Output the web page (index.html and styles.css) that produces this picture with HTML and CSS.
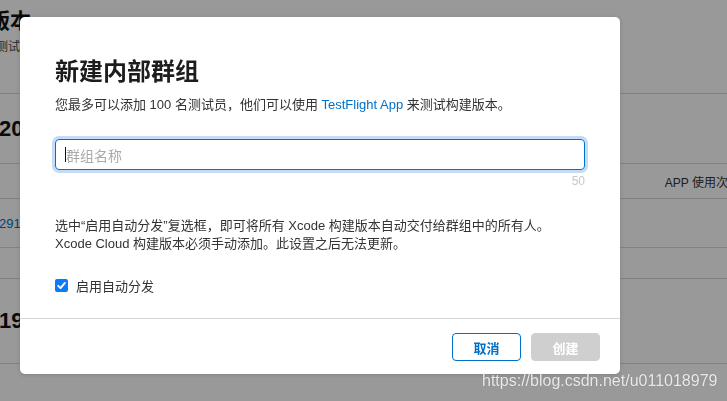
FILE: index.html
```html
<!DOCTYPE html>
<html lang="zh-CN">
<head>
<meta charset="utf-8">
<title>新建内部群组</title>
<link rel="stylesheet" href="styles.css">
</head>
<body>
<div class="page">
  <div class="page-head">
    <h1 class="page-title">版本</h1>
    <p class="page-sub">测试</p>
  </div>
  <div class="row row-big"><span class="big-num">20</span></div>
  <div class="row row-header"><span class="col-head">APP 使用次</span></div>
  <div class="row row-link"><span class="link-num">291</span></div>
  <div class="row row-thin"></div>
  <div class="row row-big2"><span class="big-num">19</span></div>
  <div class="row row-last"><span class="big-num">18</span></div>
</div>

<div class="overlay"></div>

<div class="dialog">
  <div class="dialog-body">
    <h2 class="dialog-title">新建内部群组</h2>
    <p class="dialog-desc">您最多可以添加 100 名测试员，他们可以使用 <a class="link" href="#">TestFlight App</a> 来测试构建版本。</p>
    <div class="field">
      <div class="input"><span class="caret"></span><span class="placeholder">群组名称</span></div>
      <div class="counter">50</div>
    </div>
    <p class="note">选中“启用自动分发”复选框，即可将所有 Xcode 构建版本自动交付给群组中的所有人。<br>Xcode Cloud 构建版本必须手动添加。此设置之后无法更新。</p>
    <label class="check-row">
      <span class="checkbox"><svg viewBox="0 0 13 13" width="13" height="13"><path d="M3.2 6.8 L5.5 9.1 L9.9 3.9" fill="none" stroke="#fff" stroke-width="1.9" stroke-linecap="round" stroke-linejoin="round"/></svg></span>
      <span class="check-label">启用自动分发</span>
    </label>
  </div>
  <div class="dialog-footer">
    <button class="btn btn-cancel">取消</button>
    <button class="btn btn-create">创建</button>
  </div>
</div>

<div class="watermark">https://blog.csdn.net/u011018979</div>
</body>
</html>
```

FILE: styles.css
```css
html, body {
  margin: 0;
  padding: 0;
  width: 727px;
  height: 401px;
  overflow: hidden;
  background: #fff;
  font-family: "Liberation Sans", "Noto Sans CJK SC", sans-serif;
}

.page {
  display: flex;
  flex-direction: column;
  width: 727px;
  height: 401px;
  overflow: hidden;
}

.page-head {
  flex: none;
  height: 94px;
  box-sizing: border-box;
  border-bottom: 1px solid #d9d9d9;
}

.page-title {
  margin: 7px 0 0 -11px;
  font-size: 21px;
  line-height: 28px;
  font-weight: 700;
  color: #111;
}

.page-sub {
  margin: 4px 0 0 -4px;
  font-size: 12px;
  line-height: 16px;
  color: #444;
}

.row {
  flex: none;
  box-sizing: border-box;
  border-bottom: 1px solid #d9d9d9;
  display: flex;
  align-items: center;
}

.row-big { height: 70px; }
.row-header { height: 35px; justify-content: flex-end; }
.row-link { height: 49px; }
.row-thin { height: 31px; }
.row-big2 { height: 85px; }
.row-last { height: 37px; align-items: flex-end; border-bottom: none; }

.big-num {
  margin-left: -1px;
  font-size: 22px;
  font-weight: 700;
  color: #111;
}

.row-last .big-num { margin-bottom: -22px; }

.col-head {
  margin-right: -1px;
  font-size: 12px;
  color: #333;
  white-space: nowrap;
}

.link-num {
  margin-left: -1px;
  font-size: 13px;
  color: #0070c9;
}

.overlay {
  position: fixed;
  inset: 0;
  background: rgba(0, 0, 0, 0.4);
}

.dialog {
  position: absolute;
  left: 20px;
  top: 17px;
  width: 600px;
  height: 357px;
  background: #fff;
  border-radius: 5px;
  display: flex;
  flex-direction: column;
  box-shadow: 0 1px 4px rgba(0, 0, 0, 0.15);
}

.dialog-body {
  padding: 39px 35px 0 35px;
  display: flex;
  flex-direction: column;
  height: 302px;
  box-sizing: border-box;
  border-bottom: 1px solid #d6d6d6;
}

.dialog-title {
  margin: 0;
  font-size: 24px;
  line-height: 32px;
  font-weight: 700;
  color: #1d1d1f;
}

.dialog-desc {
  margin: 7px 0 0 0;
  font-size: 13px;
  line-height: 20px;
  color: #333;
}

.link {
  color: #0070c9;
  text-decoration: none;
}

.field {
  margin-top: 24px;
  display: flex;
  flex-direction: column;
}

.input {
  height: 31px;
  box-sizing: border-box;
  border: 1px solid #0070c9;
  border-radius: 4px;
  box-shadow: 0 0 0 3px #c4dcf5;
  display: flex;
  align-items: center;
  padding-left: 9px;
}

.caret {
  width: 1px;
  height: 15px;
  background: #111;
}

.placeholder {
  font-size: 14px;
  color: #aaa;
}

.counter {
  align-self: flex-end;
  margin-top: 3px;
  font-size: 12px;
  line-height: 16px;
  color: #c8c8c8;
}

.note {
  margin: 28px 0 0 0;
  font-size: 13px;
  line-height: 18px;
  color: #333;
}

.check-row {
  margin-top: 22px;
  display: flex;
  align-items: center;
  height: 20px;
}

.checkbox {
  width: 13px;
  height: 13px;
  border-radius: 2px;
  background: #0a7aff;
  display: flex;
}

.check-label {
  margin-left: 8px;
  font-size: 13px;
  color: #333;
}

.dialog-footer {
  flex: 1;
  display: flex;
  justify-content: flex-end;
  align-items: flex-start;
  gap: 10px;
  padding: 14px 20px 0 0;
}

.btn {
  width: 69px;
  height: 28px;
  box-sizing: border-box;
  border-radius: 4px;
  font-family: "Liberation Sans", "Noto Sans CJK SC", sans-serif;
  font-size: 13px;
  font-weight: 700;
  padding: 0;
}

.btn-cancel {
  background: #fff;
  border: 1px solid #0070c9;
  color: #0070c9;
}

.btn-create {
  background: #cfcfcf;
  border: 1px solid #cfcfcf;
  color: #fff;
}

.watermark {
  position: absolute;
  left: 482px;
  top: 371px;
  font-family: "Liberation Sans", sans-serif;
  font-size: 16px;
  line-height: 20px;
  color: rgba(255, 255, 255, 0.85);
  text-shadow: 0 0 1px rgba(0, 0, 0, 0.3);
  white-space: nowrap;
}
```
